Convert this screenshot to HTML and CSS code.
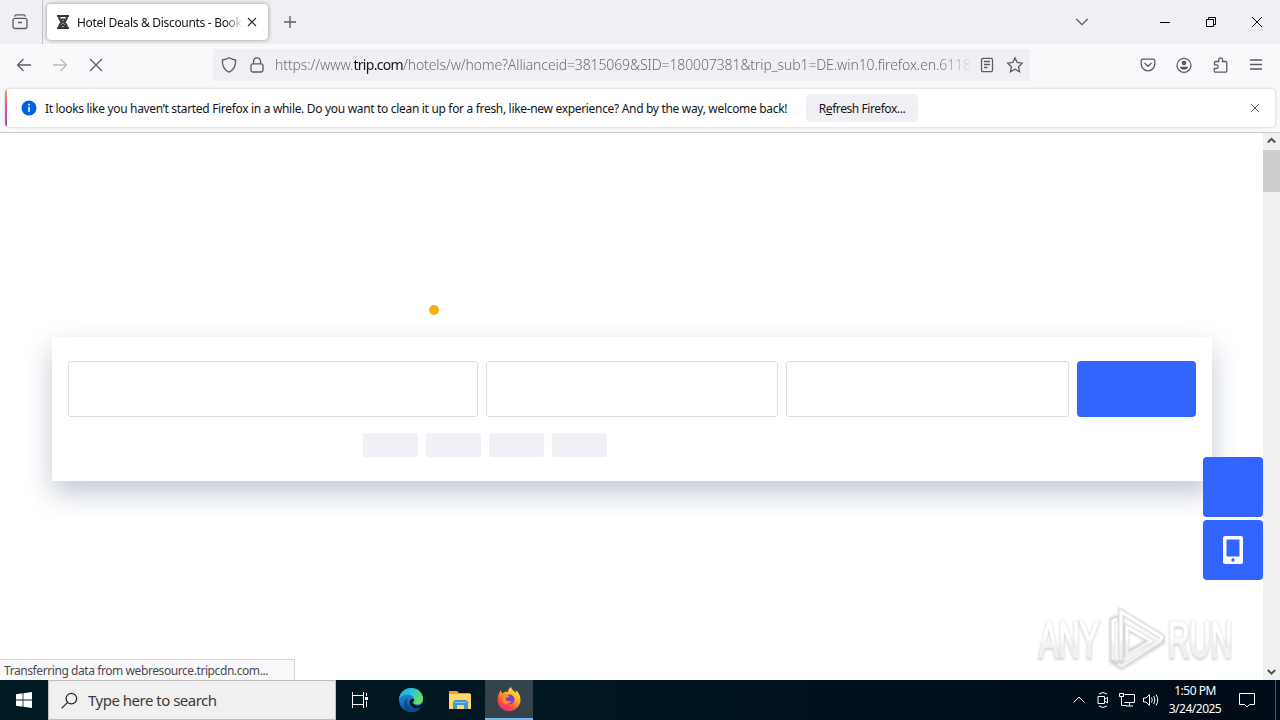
FILE: index.html
```html
<!DOCTYPE html>
<html lang="en">
  <head>
    <meta charset="UTF-8" />
    <meta name="viewport" content="width=device-width, initial-scale=1.0" />
    <title>Hotel Deals & Discounts</title>
    <link rel="stylesheet" href="styles.css">
  </head>

  <body>
    <header class="tabbar">
      <div class="firefox-view">
        <svg class="icon" viewBox="0 0 16 16"><path d="M2.500 2.500Q3 .8 5 .8h6q2 0 2.500 1.700M3 4.300h10a2 2 0 0 1 2 2v6.200a2 2 0 0 1-2 2H3a2 2 0 0 1-2-2V6.300a2 2 0 0 1 2-2zM6 8.500h4" /></svg>
      </div>
      <div class="tab">
        <svg class="favicon" viewBox="0 0 12 14"><path d="M0 1h12M0 13h12M2 1c0 3 1 4.500 3 6-2 1.500-3 3-3 6M10 1c0 3-1 4.500-3 6 2 1.500 3 3 3 6M4 4.500h4M3.500 12L6 9.500 8.500 12" /></svg>
        <span class="tab-title">Hotel Deals &amp; Discounts - Book</span>
        <svg class="tab-close" viewBox="0 0 10 10"><path d="M1 1l8 8M9 1l-8 8" /></svg>
      </div>
      <svg class="new-tab" viewBox="0 0 14 14"><path d="M7 1v12M1 7h12" /></svg>
      <svg class="icon all-tabs" viewBox="0 0 16 16"><path d="M2.300 5L8 10.700 13.700 5" /></svg>
      <div class="window-button">
        <svg viewBox="0 0 10 10"><path d="M0 5.500h10" /></svg>
      </div>
      <div class="window-button">
        <svg viewBox="0 0 10 10"><path d="M.5 2.500h7v7h-7zM2.500 2.500v-2h7v7h-2" /></svg>
      </div>
      <div class="window-button">
        <svg viewBox="0 0 10 10"><path d="M0 0l10 10M10 0L0 10" /></svg>
      </div>
    </header>

    <nav class="toolbar">
      <svg class="icon" viewBox="0 0 16 16"><path d="M15 8H1.500M7.500 2L1.500 8l6 6" /></svg>
      <svg class="icon disabled" viewBox="0 0 16 16"><path d="M1 8h13.500M8.500 2l6 6-6 6" /></svg>
      <svg class="icon" viewBox="0 0 16 16"><path d="M2 2l12 12M14 2L2 14" /></svg>
      <div class="urlbar">
        <svg class="icon" viewBox="0 0 16 16"><path d="M8 .8c2 1.200 4.300 1.900 6.600 2.200.3 5-1.300 9.600-6.600 12.200C2.700 12.600 1.100 8 1.400 3 3.700 2.700 6 2 8 .8z" /></svg>
        <svg class="icon lock" viewBox="0 0 16 16"><path d="M3.800 6.800h8.400a1.800 1.800 0 0 1 1.800 1.800v4.600a1.800 1.800 0 0 1-1.800 1.800H3.800A1.800 1.800 0 0 1 2 13.200V8.600a1.800 1.800 0 0 1 1.800-1.800zM4.500 6.800V4.300a3.500 3.500 0 0 1 7 0v2.500" /></svg>
        <span class="url">https://www.<b>trip.com</b>/hotels/w/home?Allianceid=3815069&amp;SID=180007381&amp;trip_sub1=DE.win10.firefox.en.6118</span>
        <svg class="icon" viewBox="0 0 16 16"><path d="M4 1.300h8a1.500 1.500 0 0 1 1.500 1.500v10.400a1.500 1.500 0 0 1-1.500 1.500H4a1.500 1.500 0 0 1-1.500-1.500V2.800A1.500 1.500 0 0 1 4 1.300zM5 4.500h6M5 7.500h6M5 10.500h3.500" /></svg>
        <svg class="icon star" viewBox="0 0 16 16"><path d="M8 .9l2.200 4.600 5 .7-3.600 3.500.9 5L8 12.300l-4.500 2.400.9-5L.8 6.200l5-.7z" /></svg>
      </div>
      <div class="toolbar-end">
        <svg class="icon" viewBox="0 0 16 16"><path d="M2.500 2.200h11a1.300 1.300 0 0 1 1.300 1.300V7a6.800 6.800 0 0 1-13.600 0V3.500a1.300 1.300 0 0 1 1.300-1.300zM4.500 6L8 9.300 11.500 6" /></svg>
        <svg class="icon" viewBox="0 0 16 16"><circle cx="8" cy="8.300" r="7" /><circle class="solid" cx="8" cy="6" r="2.300" /><path class="solid" d="M4 9.700h8c0 1.900-1.800 3-4 3s-4-1.100-4-3z" /></svg>
        <svg class="icon" viewBox="0 0 16 16"><path d="M3 15.200h10.500a1.300 1.300 0 0 0 1.300-1.300V5.500a1 1 0 0 0-1-1h-3.300V2.700a1.900 1.900 0 0 0-3.800 0v1.800H3.500a1 1 0 0 0-1 1v2.400h1.800a1.800 1.800 0 0 1 0 3.600H2.300v2.700a1 1 0 0 0 .7 1z" /></svg>
        <svg class="icon" viewBox="0 0 16 16"><path d="M2 3h12M2 7.500h12M2 12h12" /></svg>
      </div>
    </nav>

    <div class="notification">
      <svg class="info" viewBox="0 0 16 16"><circle cx="8" cy="8" r="7.500" fill="#0060df" /><path d="M7.200 3.800h1.600v1.600H7.200zM7.200 6.800h1.600v5H7.200z" fill="#fff" /></svg>
      <span class="message">It looks like you haven’t started Firefox in a while. Do you want to clean it up for a fresh, like-new experience? And by the way, welcome back!</span>
      <button class="refresh" type="button">R<u>e</u>fresh Firefox...</button>
      <svg class="dismiss" viewBox="0 0 10 10"><path d="M1 1l8 8M9 1l-8 8" /></svg>
    </div>

    <main class="viewport">
      <div class="page">
        <div class="dot"></div>
        <section class="search-card">
          <div class="fields">
            <div class="field"></div>
            <div class="field"></div>
            <div class="field"></div>
            <div class="search-button"></div>
          </div>
          <div class="chips">
            <div class="chip"></div>
            <div class="chip"></div>
            <div class="chip"></div>
            <div class="chip"></div>
          </div>
        </section>
      </div>

      <div class="scrollbar">
        <svg viewBox="0 0 17 17"><path d="M4.800 9.500l3.700-3.700 3.700 3.700" /></svg>
        <div class="thumb"></div>
        <svg class="scroll-down" viewBox="0 0 17 17"><path d="M4.800 7l3.700 3.700L12.200 7" /></svg>
      </div>

      <div class="side-buttons">
        <div class="side-button"></div>
        <div class="side-button">
          <svg viewBox="0 0 20 28"><path fill-rule="evenodd" d="M2 0h16a2 2 0 0 1 2 2v24a2 2 0 0 1-2 2H2a2 2 0 0 1-2-2V2a2 2 0 0 1 2-2zM3.500 3.500v17h13v-17zM10 22.300a1.700 1.700 0 1 0 .1 0z" /></svg>
        </div>
      </div>

      <svg class="watermark" viewBox="0 0 200 64">
        <defs>
          <linearGradient id="mark-fill" x1="0" y1="0" x2="0" y2="64" gradientUnits="userSpaceOnUse"><stop offset=".45" stop-color="#fff" /><stop offset=".6" stop-color="#f1f1f1" /></linearGradient>
        </defs>
        <g class="mark-shadow">
          <text x="3" y="50" textLength="60" lengthAdjust="spacingAndGlyphs">ANY</text>
          <text x="132" y="50" textLength="64" lengthAdjust="spacingAndGlyphs">RUN</text>
          <path d="M85 55V4l41 25v5L86 59l-10-6V12l6-3M90 46V19l24 14z" />
        </g>
        <g class="mark">
          <text x="3" y="49" textLength="60" lengthAdjust="spacingAndGlyphs">ANY</text>
          <text x="132" y="49" textLength="64" lengthAdjust="spacingAndGlyphs">RUN</text>
          <path d="M85 52V4l41 25-2 4-38 25-4-2M77 52V13l4-2M91 19l24 14-24 14z" />
        </g>
      </svg>

      <div class="status">Transferring data from webresource.tripcdn.com...</div>
    </main>

    <footer class="taskbar">
      <div class="start">
        <svg viewBox="0 0 16 16"><path d="M0 2.200l6.600-.9v6.300H0zM7.400 1.200L16 0v7.600H7.400zM0 8.400h6.600v6.300L0 13.800zM7.400 8.400H16V16l-8.600-1.200z" /></svg>
      </div>
      <div class="search">
        <svg viewBox="0 0 18 18"><circle cx="11" cy="7" r="5.600" /><path d="M7 11l-6.300 6.300" /></svg>
        <span>Type here to search</span>
      </div>
      <div class="app">
        <svg class="task-view" viewBox="0 0 16 16"><path d="M.5 0v3.500h11V0M.5 16v-3.500h11V16M.5 3.500v9M11.500 3.500v9M14.500 1v3M14.500 9v6" /><path class="solid" d="M13 5h3v3h-3z" /></svg>
      </div>
      <div class="app edge">
        <svg viewBox="0 0 24 24">
          <defs>
            <linearGradient id="edge-top" x1="0" y1="0" x2="1" y2=".5"><stop offset="0" stop-color="#1ba1e2" /><stop offset=".5" stop-color="#2cc3d2" /><stop offset="1" stop-color="#66e05c" /></linearGradient>
            <linearGradient id="edge-body" x1="0" y1="0" x2="0" y2="1"><stop offset="0" stop-color="#1f9ae0" /><stop offset="1" stop-color="#0f55a8" /></linearGradient>
          </defs>
          <circle cx="12" cy="12" r="12" fill="url(#edge-body)" />
          <path d="M0 11C1 4 6 0 12 0c7 0 12 5 12 10.500 0 4-3 6-6 6-2.500 0-4-1-4-2s1-1.300 1-3C15 9 12.500 6.500 9 6.500c-4 0-7 2-9 4.500z" fill="url(#edge-top)" />
          <path d="M9 10c-3 5 1 11 8 11 2 0 3.500-.5 5-1.500-2 3-5.500 4.500-9 4.500-6 0-9-4-8-8.500C5.500 13 7 11 9 10z" fill="#114a8b" />
          <path d="M14 14.500c0 2 3 3.500 6 2.800 1.500-.3 2.500-.8 4-2v4l-2.500.5c-5 2-11-.5-11-5.300 0-2 1.200-3.500 2.800-3.800 1.600 0 2.200 1 2 1.800-.2.600-1.300 1-1.300 2z" fill="#061a26" />
        </svg>
      </div>
      <div class="app">
        <svg class="explorer" viewBox="0 0 22 18"><path d="M0 0h8l2 2h11v16H0z" fill="#e9a52c" /><path d="M0 3h22v15H0z" fill="#ffd869" /><path d="M4 18v-7l2-2h11l2 2v7h-4v-4H8v4z" fill="#3e96d2" /><path d="M6 11.500h11" stroke="#8cc8ef" /></svg>
      </div>
      <div class="app active">
        <svg viewBox="0 0 24 24">
          <defs>
            <linearGradient id="fox" x1=".8" y1="0" x2=".2" y2="1"><stop offset="0" stop-color="#fff14f" /><stop offset=".4" stop-color="#ffaa1f" /><stop offset=".7" stop-color="#ff4f3a" /><stop offset="1" stop-color="#e6288e" /></linearGradient>
          </defs>
          <path d="M4 3c0 1.500.5 2.500 1.500 3.500C7 5 9 4.500 11 5c0-2 1-4 3-5 .5 3 3 3.500 5 6 0-1-.2-2-.5-3C22 5.500 23.500 9 23.500 13c0 6-5 11-11.500 11S.5 19 .5 13C.5 9 2 6 4 3z" fill="url(#fox)" />
          <circle cx="12.500" cy="12.500" r="5" fill="#7a3fd1" />
          <path d="M4.500 8c3-2 6-1 8 1.500-1 1-3 1-4 2.500 1 2.500 4 3 6 1.500-1 4-7 5-9 1-1-2-1.500-4-1-6.500z" fill="#ff8a22" />
        </svg>
      </div>
      <div class="tray">
        <svg viewBox="0 0 16 16"><path d="M2.500 10.500L8 5l5.500 5.500" /></svg>
        <svg viewBox="0 0 16 16"><path d="M3 4.500h6.500v7H3zM9.500 7.500l3-2v5.500l-3-2M4 2Q8-1 12 2M4 14q4 3 8 0" /></svg>
        <svg viewBox="0 0 16 16"><path d="M5.500 2.500h10v8h-10M10.500 10.500v3M7 14h7M.5 1.500h4v3h-4zM2.500 4.500v9h5" /></svg>
        <svg viewBox="0 0 16 16"><path d="M.5 6h2.500l3.500-3.500v11L3 10H.5zM8.500 5.500q1.500 2.500 0 5M10.700 4q2.600 4 0 8M13 2.500q3.600 5.500 0 11" /></svg>
      </div>
      <div class="clock">
        <div>1:50 PM</div>
        <div>3/24/2025</div>
      </div>
      <svg class="action-center" viewBox="0 0 16 16"><path d="M.5 1.500h15v11h-5L8 15l-2.500-2.500h-5z" /></svg>
      <div class="show-desktop"></div>
    </footer>
  </body>
</html>
```
FILE: styles.css
```css
* {
  box-sizing: border-box;
}

body {
  margin: 0;
  width: 1280px;
  height: 720px;
  overflow: hidden;
  display: flex;
  flex-direction: column;
  background-color: #f9f9fb;
  font-family: "Noto Sans", "Open Sans", sans-serif;
  font-size: 12px;
  color: #15141a;
}

svg {
  display: block;
  flex: none;
  overflow: visible;
  fill: none;
  stroke: #5b5b66;
}

.icon {
  width: 16px;
  height: 16px;
  stroke-width: 1.3;
}

.icon .solid {
  fill: #5b5b66;
  stroke: none;
}

/* tab strip */
.tabbar {
  height: 44px;
  flex: none;
  display: flex;
  align-items: center;
  background-color: #f0f0f4;
}

.firefox-view {
  width: 43px;
  height: 44px;
  padding: 14px 0 0 12px;
  border-right: 1px solid #bebec5;
}

.tab {
  width: 221px;
  height: 36px;
  margin-left: 4px;
  padding: 0 11px 0 10px;
  display: flex;
  align-items: center;
  background-color: #fff;
  border-radius: 4px;
  box-shadow: 0 0 4px rgba(0, 0, 0, 0.4);
}

.favicon {
  width: 12px;
  height: 14px;
  stroke: #38383d;
  stroke-width: 2;
}

.tab-title {
  width: 166px;
  margin-left: 8px;
  overflow: hidden;
  white-space: nowrap;
  letter-spacing: -0.31px;
  mask-image: linear-gradient(to left, transparent, #000 18px);
}

.tab-close {
  width: 10px;
  height: 10px;
  margin-left: 4px;
  stroke: #2b2a33;
  stroke-width: 1.2;
}

.new-tab {
  width: 14px;
  height: 14px;
  margin-left: 15px;
  stroke-width: 1.3;
}

.all-tabs {
  margin: 0 52px 0 auto;
}

.window-button {
  width: 46px;
  display: flex;
  justify-content: center;
}

.window-button svg {
  width: 10px;
  height: 10px;
  stroke: #000;
}

/* navigation */
.toolbar {
  height: 44px;
  flex: none;
  padding: 0 16px 3px;
  display: flex;
  align-items: center;
  gap: 20px;
}

.disabled {
  opacity: 0.4;
}

.urlbar {
  width: 817px;
  height: 32px;
  margin-left: 89px;
  padding: 0 7px 0 8px;
  display: flex;
  align-items: center;
  background-color: #f0f0f4;
}

.lock {
  margin-left: 12px;
}

.url {
  width: 698px;
  margin: 0 6px 0 10px;
  overflow: hidden;
  white-space: nowrap;
  font-size: 14px;
  font-weight: 300;
  letter-spacing: -0.11px;
  color: #6b6b75;
  mask-image: linear-gradient(to left, transparent, #000 36px);
}

.url b {
  font-weight: 400;
  letter-spacing: -0.7px;
  color: #15141a;
}

.star {
  margin-left: 12px;
}

.toolbar-end {
  margin-left: auto;
  display: flex;
  gap: 20px;
}

/* notification bar */
.notification {
  height: 38px;
  flex: none;
  margin: 1px 5px 5px;
  padding: 0 15px 0 14px;
  display: flex;
  align-items: center;
  background: linear-gradient(#ff9a56, #e0529a 45%, #9059c0) left / 2px 100% no-repeat #fff;
  border-radius: 4px;
  box-shadow: 0 0 3px rgba(0, 0, 0, 0.2);
}

.info {
  width: 16px;
  height: 16px;
  margin-left: 2px;
  stroke: none;
}

.message {
  width: 742px;
  margin-left: 8px;
  white-space: nowrap;
  letter-spacing: -0.32px;
  padding-top: 1px;
}

.refresh {
  width: 112px;
  height: 28px;
  margin-left: 19px;
  padding: 1px 0 0;
  border: 0;
  border-radius: 4px;
  background-color: #f0f0f4;
  font: inherit;
  letter-spacing: -0.42px;
  color: inherit;
}

.dismiss {
  width: 10px;
  height: 10px;
  margin-left: auto;
}

/* page content */
.viewport {
  position: relative;
  flex: 1;
  display: flex;
  border-top: 1px solid #cacaca;
  background-color: #fff;
}

.page {
  flex: 1;
  padding: 172px 51px 0 52px;
}

.dot {
  width: 10px;
  height: 10px;
  margin-left: 377px;
  border-radius: 50%;
  background-color: #fab20b;
}

.search-card {
  height: 144px;
  margin-top: 22px;
  padding: 24px 16px;
  background-color: #fff;
  box-shadow: 0 12px 26px rgba(25, 50, 95, 0.27);
}

.fields {
  height: 56px;
  display: grid;
  grid-template-columns: 410px 292px 283px 119px;
  gap: 8px;
}

.field {
  border: 1px solid #dadde2;
  border-radius: 3px;
}

.search-button {
  border-radius: 4px;
  background-color: #3264ff;
}

.chips {
  display: flex;
  gap: 8px;
  margin: 16px 0 0 295px;
}

.chip {
  width: 55px;
  height: 24px;
  border-radius: 3px;
  background-color: #eff1f6;
}

.scrollbar {
  width: 17px;
  display: flex;
  flex-direction: column;
  background-color: #f0f0f0;
}

.scrollbar svg {
  width: 17px;
  height: 17px;
  stroke: #505050;
  stroke-width: 2;
}

.thumb {
  height: 42px;
  background-color: #cdcdcd;
}

.scroll-down {
  margin-top: auto;
}

.side-buttons {
  position: absolute;
  right: 17px;
  top: 324px;
  display: grid;
  gap: 3px;
}

.side-button {
  width: 60px;
  height: 60px;
  display: flex;
  align-items: center;
  justify-content: center;
  border-radius: 4px;
  background-color: #3264ff;
}

.side-button svg {
  width: 20px;
  height: 28px;
  fill: #fff;
  stroke: none;
}

.watermark {
  position: absolute;
  right: 44px;
  bottom: 8px;
  width: 200px;
  height: 64px;
  font-family: "Liberation Sans", sans-serif;
  font-size: 50px;
}

.mark {
  fill: url(#mark-fill);
  stroke: url(#mark-fill);
  stroke-width: 1.5;
}

/* soft grey halo round the white strokes */
.mark-shadow {
  fill: #d4d4d4;
  stroke: #d8d8d8;
  stroke-width: 4;
  filter: blur(1.2px);
}

.mark path {
  fill: none;
  stroke-width: 3;
}

.mark-shadow path {
  fill: none;
  stroke-width: 6;
}

.status {
  position: absolute;
  left: 0;
  bottom: 0;
  width: 295px;
  height: 21px;
  padding: 2px 0 0 4px;
  border: 1px solid #d7d7db;
  border-width: 1px 1px 0 0;
  background-color: #f9f9fb;
  color: #4a4a50;
  line-height: 17px;
  letter-spacing: -0.42px;
  white-space: nowrap;
}

/* windows taskbar */
.taskbar {
  height: 40px;
  flex: none;
  display: flex;
  align-items: center;
  background: linear-gradient(to right, #001a22, #001620 45%, #000c18);
}

.taskbar svg {
  width: 16px;
  height: 16px;
  stroke: #fff;
}

.start {
  width: 48px;
  display: flex;
  justify-content: center;
}

.taskbar .start svg {
  fill: #fff;
  stroke: none;
}

.search {
  width: 288px;
  height: 40px;
  padding-left: 12px;
  display: flex;
  align-items: center;
  gap: 10px;
  border: 1px solid #bfbfbf;
  background-color: #f0f0f0;
  font-size: 15px;
  letter-spacing: -0.5px;
  color: #3a3a3a;
}

.taskbar .search svg {
  width: 17px;
  height: 17px;
  stroke: #222;
  stroke-width: 1.3;
}

.app {
  width: 48px;
  height: 40px;
  display: flex;
  align-items: center;
  justify-content: center;
}

.edge {
  margin: 0 1px 0 3px;
}

.app svg {
  width: 24px;
  height: 24px;
  stroke: none;
}

.app .task-view {
  width: 16px;
  height: 16px;
  stroke: #fff;
}

.task-view .solid {
  fill: #fff;
  stroke: none;
}

.app .explorer {
  width: 22px;
  height: 18px;
}

.active {
  margin-left: 1px;
  background-color: #34434c;
  border-bottom: 2px solid #76b9ed;
}

.tray {
  margin-left: auto;
  display: flex;
  gap: 8px;
}

.clock {
  width: 56px;
  margin-left: 8px;
  text-align: center;
  color: #fff;
  line-height: 18px;
  letter-spacing: -0.5px;
}

.action-center {
  margin-left: 16px;
}

.show-desktop {
  width: 5px;
  height: 40px;
  margin-left: 20px;
  border-left: 1px solid #4d5661;
}
```
